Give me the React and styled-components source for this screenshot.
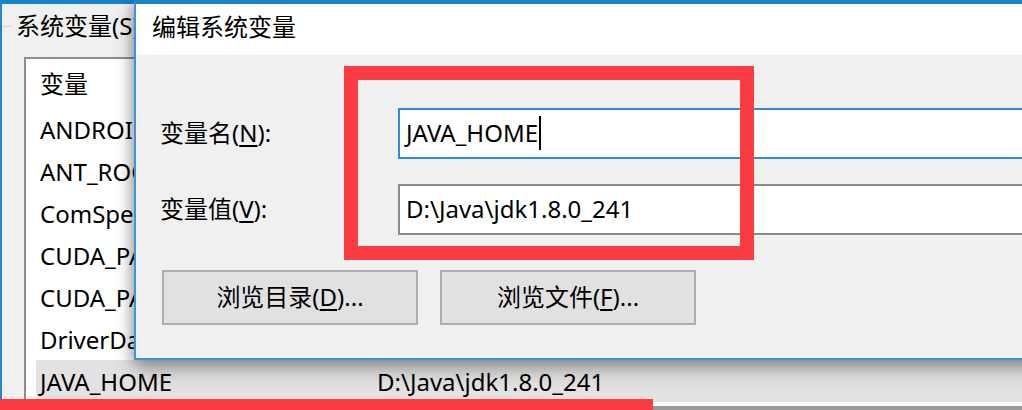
import styled, { createGlobalStyle } from 'styled-components'

const Global = createGlobalStyle`
  html, body { margin: 0; padding: 0; background: #f0f0f0; }
  * { box-sizing: border-box; }
`

const FONT = `"Noto Sans", "Noto Sans CJK SC", sans-serif`

const Screen = styled.div`
  position: relative;
  width: 1022px;
  height: 410px;
  overflow: hidden;
  background: #f0f0f0;
  font-family: ${FONT};
  font-size: 24px;
  color: #000;
`

// ── background window: environment variables ──
const BackWindow = styled.div`
  height: 100%;
  border-top: 4px solid #1883c6;
  border-left: 2px solid #1f86d6;
  background: #f0f0f0;
  display: flex;
  flex-direction: column;
`

const GroupHead = styled.div`
  display: flex;
  align-items: center;
  height: 46px;
  padding-bottom: 1px;
  gap: 4px;
  &::before {
    content: '';
    width: 10px;
    height: 1px;
    background: #d5d5d5;
  }
  span {
    white-space: nowrap;
    line-height: 1;
  }
`

const ListBox = styled.div`
  flex: 1;
  margin: 8px 0 0 22px;
  border-top: 2px solid #8e8e8e;
  border-left: 2px solid #8e8e8e;
  background: #fff;
  padding-left: 10px;
  display: flex;
  flex-direction: column;
`

const ListHeader = styled.div`
  height: 49px;
  display: flex;
  align-items: center;
  padding-left: 4px;
  padding-bottom: 2px;
`

const Row = styled.div`
  height: 42px;
  display: flex;
  align-items: center;
  white-space: nowrap;
  background: ${({ $selected }) => ($selected ? '#e2e2e2' : 'transparent')};
`

const Cell = styled.div`
  padding-left: 4px;
  width: ${({ $w }) => ($w ? `${$w}px` : 'auto')};
  flex-shrink: 0;
`

const ScrollEdge = styled.div`
  margin-top: 4px;
  height: 4px;
  background: #999;
`

// ── dialog window ──
const Dialog = styled.div`
  position: absolute;
  left: 134px;
  top: 0;
  width: 1000px;
  height: 360px;
  border-top: 4px solid #1883c6;
  border-left: 2px solid #3b94e2;
  border-bottom: 2px solid #3b94e2;
  background: #f0f0f0;
  box-shadow: 0 8px 18px rgba(0, 0, 0, 0.38), -3px 0 10px rgba(0, 0, 0, 0.14);
  display: flex;
  flex-direction: column;
`

const TitleBar = styled.div`
  height: 51px;
  background: #fff;
  display: flex;
  align-items: center;
  padding: 0 0 5px 16px;
  line-height: 1;
`

const Body = styled.div`
  flex: 1;
  padding: 53px 0 0 24px;
  display: flex;
  flex-direction: column;
`

const Field = styled.div`
  display: grid;
  grid-template-columns: 238px 700px;
  align-items: center;
  margin-bottom: ${({ $gap }) => $gap}px;
`

const Label = styled.div`
  line-height: 1;
  padding-bottom: 2px;
  white-space: nowrap;
`

const Key = styled.span`
  text-decoration: underline;
  text-underline-offset: 3px;
`

const Input = styled.div`
  height: 51px;
  border: 2px solid ${({ $focus }) => ($focus ? '#2f8ae0' : '#8a8a8a')};
  background: #fff;
  display: flex;
  align-items: center;
  padding: 0 0 2px 6px;
  white-space: nowrap;
`

const Caret = styled.span`
  display: inline-block;
  width: 2px;
  height: 34px;
  margin-left: 1px;
  background: #000;
`

const Buttons = styled.div`
  display: flex;
  gap: 22px;
  padding-left: 2px;
`

const Button = styled.button`
  width: 256px;
  height: 55px;
  border: 2px solid #adadad;
  background: #e1e1e1;
  font-family: ${FONT};
  font-size: 24px;
  color: #000;
  padding: 0 0 2px;
  line-height: 1;
  white-space: nowrap;
`

// ── red annotation marks ──
const Mark = styled.div`
  position: absolute;
  border: 14px solid #fb3c43;
`

const rows = [
  ['ANDROID_HOME', ''],
  ['ANT_ROOT', ''],
  ['ComSpec', ''],
  ['CUDA_PATH', ''],
  ['CUDA_PATH_V10_1', ''],
  ['DriverData', ''],
  ['JAVA_HOME', 'D:\\Java\\jdk1.8.0_241'],
]

export default function App() {
  return (
    <>
      <Global />
      <Screen>
        <BackWindow>
          <GroupHead>
            <span>系统变量(S)</span>
          </GroupHead>
          <ListBox>
            <ListHeader>变量</ListHeader>
            {rows.map(([name, value]) => (
              <Row key={name} $selected={name === 'JAVA_HOME'}>
                <Cell $w={337}>{name}</Cell>
                <Cell>{value}</Cell>
              </Row>
            ))}
            <ScrollEdge />
          </ListBox>
        </BackWindow>

        <Dialog>
          <TitleBar>编辑系统变量</TitleBar>
          <Body>
            <Field $gap={25}>
              <Label>变量名(<Key>N</Key>):</Label>
              <Input $focus>
                JAVA_HOME
                <Caret />
              </Input>
            </Field>
            <Field $gap={35}>
              <Label>变量值(<Key>V</Key>):</Label>
              <Input>D:\Java\jdk1.8.0_241</Input>
            </Field>
            <Buttons>
              <Button>浏览目录(<Key>D</Key>)...</Button>
              <Button>浏览文件(<Key>F</Key>)...</Button>
            </Buttons>
          </Body>
        </Dialog>

        <Mark style={{ left: 344, top: 66, width: 410, height: 194 }} />
        <Mark style={{ left: 0, top: 399, width: 653, height: 40 }} />
      </Screen>
    </>
  )
}
